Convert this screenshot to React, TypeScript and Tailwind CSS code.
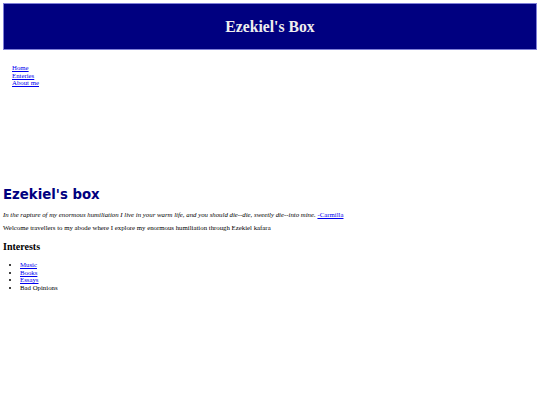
import React from 'react';

export default function App() {
  return (
    <div className="min-h-screen bg-white px-[3px] pt-[3px] font-['Liberation_Serif',serif] text-black">
      <header className="h-[47px] border border-[#8080d8] bg-[#000080] flex items-center justify-center">
        <h1 className="text-[15.7px] font-bold text-[#eeeeee] leading-none">Ezekiel's Box</h1>
      </header>

      <nav className="mt-[14px] pl-[9px] text-[6.8px] leading-[7.6px] flex flex-col items-start">
        <a href="#" className="text-[#0000ee] underline">Home</a>
        <a href="#" className="text-[#0000ee] underline">Enteries</a>
        <a href="#" className="text-[#0000ee] underline">About me</a>
      </nav>

      <main className="mt-[100px]">
        <h2 className="font-['DejaVu_Sans',sans-serif] font-bold text-[13.3px] leading-[16px] text-[#000080]">
          Ezekiel's box
        </h2>
        <p className="mt-[8px] text-[6.8px] leading-[7.7px]">
          <i>
            In the rapture of my enormous humiliation I live in your warm life, and you should die--die, sweetly die--into mine.
          </i>{' '}
          <a href="#" className="text-[#0000ee] underline">-Carmilla</a>
        </p>
        <p className="mt-[6px] text-[6.8px] leading-[7.7px]">
          Welcome travellers to my abode where I explore my enormous humiliation through Ezekiel kafara
        </p>
        <h3 className="mt-[8.5px] text-[10px] font-bold leading-[11.5px]">Interests</h3>
        <ul className="mt-[8.8px] list-disc pl-[17px] text-[6.8px] leading-[7.6px]">
          <li><a href="#" className="text-[#0000ee] underline">Music</a></li>
          <li><a href="#" className="text-[#0000ee] underline">Books</a></li>
          <li><a href="#" className="text-[#0000ee] underline">Essays</a></li>
          <li>Bad Opinions</li>
        </ul>
      </main>
    </div>
  );
}
